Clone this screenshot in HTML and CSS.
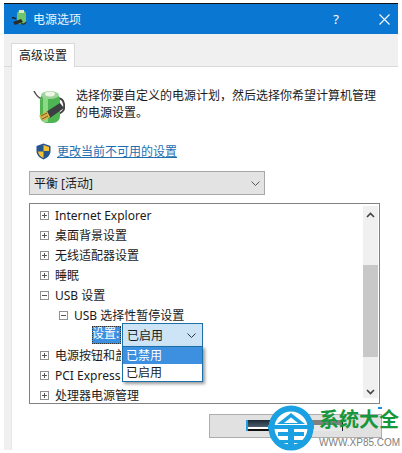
FILE: index.html
```html
<!doctype html>
<html lang="zh-CN">
<head>
  <meta charset="utf-8">
  <title>电源选项</title>
  <link rel="stylesheet" href="styles.css">
</head>
<body>

<div id="dialog">

  <div id="titlebar">
    <svg class="title-icon" width="18" height="18" viewBox="0 0 18 18">
      <rect x="6" y="1" width="9" height="13" rx="3" fill="#6fc36a"/>
      <rect x="8" y="0" width="5" height="3" fill="#d8e8d0"/>
      <path d="M1 8c2-1 3 0 4 1" stroke="#222" stroke-width="1.5" fill="none"/>
      <path d="M2 12l8-3 2 3-8 3z" fill="#2a2a2a"/>
      <path d="M10 13c2 2 4 1 5-1" stroke="#333" stroke-width="1.5" fill="none"/>
    </svg>
    <span class="title-text">电源选项</span>
    <span class="title-help">?</span>
    <svg class="title-close" width="11" height="11" viewBox="0 0 11 11">
      <path d="M0.5 0.5l10 10M10.5 0.5l-10 10" stroke="#fff" stroke-width="1.1"/>
    </svg>
  </div>

  <div id="tabstrip">
    <div class="tab">高级设置</div>
  </div>

  <div id="panel">

    <div class="intro">
      <svg class="battery" width="33" height="36" viewBox="0 0 33 36">
        <path d="M1 3c3 6 5 7 8 8" stroke="#555" stroke-width="1.6" fill="none"/>
        <path d="M24 10c6 0 8 5 7 11-1 3-3 4-6 5" stroke="#444" stroke-width="2" fill="none"/>
        <rect x="7" y="5" width="20" height="30" rx="7" fill="#4fb552"/>
        <rect x="10" y="6" width="5" height="28" fill="#8ada85"/>
        <ellipse cx="17" cy="7" rx="9" ry="4" fill="#9fd39a"/>
        <ellipse cx="17" cy="6" rx="5" ry="2.4" fill="#eef5e6"/>
        <path d="M13 24l14-9 4 5-14 10z" fill="#3b3f42"/>
        <path d="M6 28l8-5 3 6-7 4z" fill="#d8b24a"/>
        <path d="M8 28l6-3M9 31l6-3" stroke="#7a5d1c" stroke-width="1"/>
      </svg>
      <p class="intro-text">选择你要自定义的电源计划，然后选择你希望计算机管理的电源设置。</p>
    </div>

    <div class="change-link">
      <svg width="15" height="17" viewBox="0 0 15 17">
        <path d="M7.5 0.5L14.5 3v5c0 4-3 7-7 8.500C3.500 15 .5 12 .5 8V3z" fill="#27558f"/>
        <path d="M7.500 2L13 4v4H7.500z" fill="#f2c230"/>
        <path d="M7.500 8.500H2c.3 3 2.500 5.500 5.500 6.500z" fill="#f2c230"/>
      </svg>
      <a href="#">更改当前不可用的设置</a>
    </div>

    <div class="plan-select">
      <span>平衡 [活动]</span>
      <svg class="chevron" width="9" height="5" viewBox="0 0 9 5"><path d="M.5 .5l4 4 4-4" stroke="#555" fill="none"/></svg>
    </div>

    <div id="tree">
      <div class="tree-rows">
        <div class="row"><i class="box plus"></i>Internet Explorer</div>
        <div class="row"><i class="box plus"></i>桌面背景设置</div>
        <div class="row"><i class="box plus"></i>无线适配器设置</div>
        <div class="row"><i class="box plus"></i>睡眠</div>
        <div class="row"><i class="box"></i>USB 设置</div>
        <div class="row level2"><i class="box"></i>USB 选择性暂停设置</div>
        <div class="row level3">
          <span class="setting-label">设置:</span>
          <div class="combo">
            <span>已启用</span>
            <svg class="chevron" width="9" height="5" viewBox="0 0 9 5"><path d="M.5 .5l4 4 4-4" stroke="#333" fill="none"/></svg>
            <div class="combo-list">
              <div class="combo-item selected">已禁用</div>
              <div class="combo-item">已启用</div>
            </div>
          </div>
        </div>
        <div class="row"><i class="box plus"></i><span class="clipped">电源按钮和盖子</span></div>
        <div class="row"><i class="box plus"></i><span class="clipped">PCI Express</span></div>
        <div class="row"><i class="box plus"></i>处理器电源管理</div>
      </div>
      <div class="scrollbar">
        <svg class="arrow" width="9" height="6" viewBox="0 0 9 6"><path d="M1 5l3.500-3.500L8 5" stroke="#444" stroke-width="1.600" fill="none"/></svg>
        <div class="track"><div class="thumb"></div></div>
        <svg class="arrow" width="9" height="6" viewBox="0 0 9 6"><path d="M1 1l3.500 3.500L8 1" stroke="#444" stroke-width="1.600" fill="none"/></svg>
      </div>
    </div>

    <div class="actions">
      <div class="apply-btn"><span class="smudge"></span></div>
    </div>

  </div>
</div>

<div id="watermark">
  <svg class="wm-logo" width="46" height="46" viewBox="0 0 46 46">
    <circle cx="23" cy="23" r="19.500" fill="#fff" stroke="#1ba1e2" stroke-width="6"/>
    <path d="M23 8L9 19h28z" fill="#1ba1e2"/>
    <path d="M23 12.500L16 18h14z" fill="#fff"/>
    <rect x="0" y="20" width="46" height="4" fill="#1ba1e2"/>
    <rect x="10" y="27" width="26" height="4" fill="#1ba1e2"/>
    <rect x="20" y="24" width="6" height="17" fill="#1ba1e2"/>
    <rect x="12" y="35" width="22" height="3" fill="#1ba1e2"/>
  </svg>
  <div class="wm-text">
    <div class="wm-name">系统大全</div>
    <div class="wm-url">WWW.XP85.COM</div>
  </div>
  <span class="wm-dash"></span>
</div>

</body>
</html>
```

FILE: styles.css
```css
html {
  box-sizing: border-box;
}
*, *:before, *:after {
  box-sizing: inherit;
}

body {
  margin: 0;
  width: 402px;
  height: 453px;
  overflow: hidden;
  position: relative;
  background: #fff;
  color: #1a1a1a;
  font-family: "Noto Sans", "Noto Sans CJK SC", sans-serif;
  font-size: 12px;
}

#dialog {
  margin: 3px 0 0 4px;
  width: 394px;
  height: 447px;
  background: #f0f0f0;
  display: flex;
  flex-direction: column;
}

#titlebar {
  height: 31px;
  flex: none;
  border-top: 1px solid #111;
  background: #0a78d2;
  display: flex;
  align-items: center;
  color: #fff;
  padding-left: 7px;
  font-size: 12px;
}

.title-icon {
  margin-right: 4px;
}

.title-text {
  flex: 1;
  color: #e8f3fc;
}

.title-help {
  font-size: 13px;
  margin-right: 40px;
}

.title-close {
  margin-right: 8px;
}

#tabstrip {
  height: 33px;
  flex: none;
  padding: 9px 0 0 7px;
  border-bottom: 1px solid #d9d9d9;
}

.tab {
  width: 64px;
  height: 25px;
  background: #fff;
  border: 1px solid #d9d9d9;
  border-bottom: none;
  text-align: center;
  line-height: 23px;
}

#panel {
  flex: 1;
  margin-left: 7px;
  background: #fff;
  border-left: 1px solid #e6e6e6;
  padding: 20px 0 0 17px;
}

.intro {
  display: flex;
  height: 40px;
}

.battery {
  margin: 1px 0 0 4px;
  flex: none;
}

.intro-text {
  margin: 0 0 0 10px;
  width: 302px;
  line-height: 17px;
}

.change-link {
  margin-top: 14px;
  padding-left: 7px;
  height: 20px;
  display: flex;
  align-items: center;
  gap: 6px;
}

.change-link a {
  color: #1f6fb0;
}

.plan-select {
  margin-top: 10px;
  width: 236px;
  height: 24px;
  background: #e3e3e3;
  border: 1px solid #a8a8a8;
  display: flex;
  align-items: center;
  justify-content: space-between;
  padding: 0 4px 0 4px;
}

#tree {
  margin-top: 8px;
  width: 351px;
  height: 201px;
  border: 1px solid #828282;
  display: flex;
  justify-content: space-between;
  padding-top: 1px;
}

.tree-rows {
  padding: 0 0 0 10px;
  flex: 1;
}

.row {
  height: 20px;
  display: flex;
  align-items: center;
  gap: 6px;
  white-space: nowrap;
}

.clipped {
  width: 66px;
  overflow: hidden;
}

.level2 {
  padding-left: 19px;
}

.level3 {
  padding-left: 52px;
  gap: 1px;
}

.box {
  width: 9px;
  height: 9px;
  flex: none;
  border: 1px solid #919191;
  background: linear-gradient(#555, #555) center / 5px 1px no-repeat;
}

.box.plus {
  background:
    linear-gradient(#555, #555) center / 5px 1px no-repeat,
    linear-gradient(#555, #555) center / 1px 5px no-repeat;
}

.setting-label {
  width: 29px;
  height: 18px;
  line-height: 16px;
  background: #3d8fe0;
  color: #fff;
  outline: 1px dotted #333;
  outline-offset: -1px;
  overflow: hidden;
}

.combo {
  position: relative;
  width: 81px;
  height: 24px;
  background: #cde4f7;
  border: 1px solid #1d6fa8;
  display: flex;
  align-items: center;
  justify-content: space-between;
  padding: 0 6px 0 4px;
}

.combo-list {
  position: absolute;
  left: -1px;
  top: 22px;
  width: 81px;
  height: 36px;
  background: #fff;
  border: 1px solid #1d6fa8;
  box-shadow: 2px 2px 3px rgba(0, 0, 0, 0.4);
}

.combo-item {
  height: 17px;
  line-height: 17px;
  padding-left: 3px;
}

.combo-item.selected {
  background: #3d8fe0;
  color: #fff;
}

.scrollbar {
  width: 15px;
  height: 192px;
  margin: 1px 1px 0 0;
  flex: none;
  background: #f0f0f0;
  display: flex;
  flex-direction: column;
  align-items: center;
  padding: 6px 0 3px;
}

.track {
  flex: 1;
  width: 100%;
  padding-top: 47px;
}

.thumb {
  height: 92px;
  background: #c8c8c8;
}

.actions {
  margin-top: 10px;
  padding-left: 180px;
}

.apply-btn {
  width: 173px;
  height: 24px;
  background: #e1e1e1;
  border: 1px solid #adadad;
  padding: 5px 0 0 36px;
}

.smudge {
  display: block;
  width: 97px;
  height: 11px;
  background:
    linear-gradient(90deg, transparent 68%, #808080 68%) top / 100% 5px no-repeat,
    linear-gradient(90deg, transparent 68%, #e8e8e8 68%),
    linear-gradient(#1c2a36, #4a5a68 60%, #fff 60%, #fff 80%, #111 80%);
  border-left: 2px solid #1ba1e2;
  border-right: 1px solid #222;
}

#watermark {
  position: absolute;
  left: 268px;
  top: 405px;
  width: 134px;
  height: 46px;
  display: flex;
}

.wm-logo {
  flex: none;
}

.wm-text {
  margin-left: 5px;
}

.wm-name {
  font-size: 20px;
  font-weight: 700;
  line-height: 24px;
  margin-top: 3px;
  color: #17973c;
  white-space: nowrap;
}

.wm-url {
  font-family: "Liberation Sans", sans-serif;
  font-size: 10px;
  line-height: 13px;
  margin-top: 4px;
  color: #808080;
  white-space: nowrap;
}

.wm-dash {
  position: absolute;
  left: 110px;
  top: 2px;
  width: 4px;
  height: 2px;
  background: #1c8ee8;
}
```
